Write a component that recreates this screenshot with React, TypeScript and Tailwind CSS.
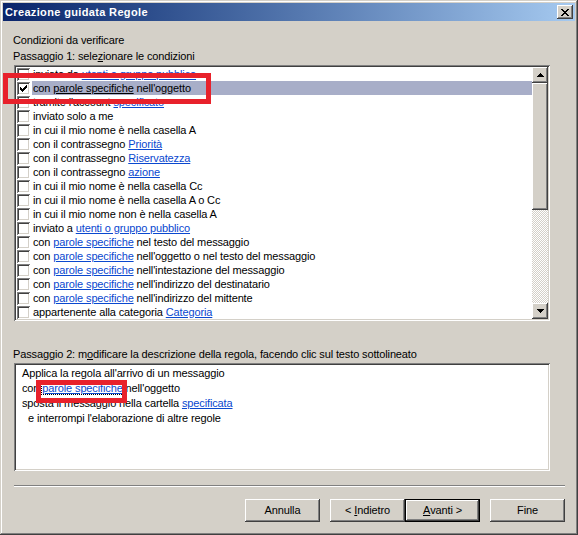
import React from "react";

const raised =
  "shadow-[inset_-1px_-1px_0_#404040,inset_1px_1px_0_#ffffff,inset_-2px_-2px_0_#808080,inset_2px_2px_0_#d4d0c8]";
const sunken =
  "shadow-[inset_1px_1px_0_#808080,inset_-1px_-1px_0_#ffffff,inset_2px_2px_0_#404040,inset_-2px_-2px_0_#d4d0c8]";

type Part = { t: string; link?: boolean };
type Row = { parts: Part[]; checked?: boolean; selected?: boolean };

const L = (t: string): Part => ({ t, link: true });
const T = (t: string): Part => ({ t });

const rows: Row[] = [
  { parts: [T("inviato da "), L("utenti o gruppo pubblico")] },
  { parts: [T("con "), L("parole specifiche"), T(" nell'oggetto")], checked: true, selected: true },
  { parts: [T("tramite l'account "), L("specificato")] },
  { parts: [T("inviato solo a me")] },
  { parts: [T("in cui il mio nome è nella casella A")] },
  { parts: [T("con il contrassegno "), L("Priorità")] },
  { parts: [T("con il contrassegno "), L("Riservatezza")] },
  { parts: [T("con il contrassegno "), L("azione")] },
  { parts: [T("in cui il mio nome è nella casella Cc")] },
  { parts: [T("in cui il mio nome è nella casella A o Cc")] },
  { parts: [T("in cui il mio nome non è nella casella A")] },
  { parts: [T("inviato a "), L("utenti o gruppo pubblico")] },
  { parts: [T("con "), L("parole specifiche"), T(" nel testo del messaggio")] },
  { parts: [T("con "), L("parole specifiche"), T(" nell'oggetto o nel testo del messaggio")] },
  { parts: [T("con "), L("parole specifiche"), T(" nell'intestazione del messaggio")] },
  { parts: [T("con "), L("parole specifiche"), T(" nell'indirizzo del destinatario")] },
  { parts: [T("con "), L("parole specifiche"), T(" nell'indirizzo del mittente")] },
  { parts: [T("appartenente alla categoria "), L("Categoria")] },
];

function Checkbox({ checked }: { checked?: boolean }) {
  return (
    <div className={`w-[13px] h-[13px] bg-white shrink-0 flex items-center justify-center ${sunken}`}>
      {checked && (
        <svg width="7" height="7" viewBox="0 0 7 7" shapeRendering="crispEdges">
          <path
            d="M6 0h1v1h-1zM5 1h2v1h-2zM0 2h1v1h-1zM4 2h3v1h-3zM0 3h2v1h-2zM3 3h3v1h-3zM0 4h5v1h-5zM1 5h3v1h-3zM2 6h1v1h-1z"
            fill="#000"
          />
        </svg>
      )}
    </div>
  );
}

function ScrollBtn({ up }: { up?: boolean }) {
  return (
    <div className={`w-[16px] h-[16px] bg-[#d4d0c8] flex items-center justify-center ${raised}`}>
      <svg width="7" height="4" viewBox="0 0 7 4" shapeRendering="crispEdges">
        {up ? (
          <path d="M3 0h1v1h1v1h1v1h1v1h-7v-1h1v-1h1v-1h1z" fill="#000" />
        ) : (
          <path d="M0 0h7v1h-1v1h-1v1h-1v1h-1v-1h-1v-1h-1v-1h-1z" fill="#000" />
        )}
      </svg>
    </div>
  );
}

function Btn({ children, def }: { children: React.ReactNode; def?: boolean }) {
  if (def) {
    return (
      <div className="w-[75px] h-[23px] border border-black">
        <div className={`w-full h-full bg-[#d4d0c8] flex items-center justify-center ${raised}`}>
          {children}
        </div>
      </div>
    );
  }
  return (
    <div className={`w-[75px] h-[23px] bg-[#d4d0c8] flex items-center justify-center ${raised}`}>
      {children}
    </div>
  );
}

export default function App() {
  return (
    <div
      className="relative w-[578px] h-[535px] bg-[#d4d0c8] p-[3px] flex flex-col text-[11px] leading-[13px] tracking-[-0.13px] text-black shadow-[inset_-1px_-1px_0_#404040,inset_1px_1px_0_#d4d0c8,inset_-2px_-2px_0_#808080,inset_2px_2px_0_#ffffff] overflow-hidden"
      style={{ fontFamily: '"Liberation Sans", Arial, sans-serif' }}
    >
      {/* Title bar */}
      <div className="h-[18px] flex items-center justify-between bg-gradient-to-r from-[#0a246a] to-[#a6caf0] pl-[2px] pr-[2px]">
        <span className="text-white font-bold text-[11px] leading-[13px] tracking-[0.35px]">
          Creazione guidata Regole
        </span>
        <div className={`w-[16px] h-[14px] bg-[#d4d0c8] flex items-center justify-center ${raised}`}>
          <svg width="8" height="7" viewBox="0 0 8 7" shapeRendering="crispEdges">
            <path
              d="M0 0h2v1h1v1h2v-1h1v-1h2v1h-1v1h-1v1h-1v1h1v1h1v1h1v1h-2v-1h-1v-1h-2v1h-1v1h-2v-1h1v-1h1v-1h1v-1h-1v-1h-1v-1h-1z"
              fill="#000"
            />
          </svg>
        </div>
      </div>

      {/* Body */}
      <div className="flex flex-col pl-[10px] pr-[10px]">
        <div className="mt-[13px] h-[13px]">Condizioni da verificare</div>
        <div className="mt-[3px] h-[13px]">
          Passaggio 1: sele<span className="underline">z</span>ionare le condizioni
        </div>

        {/* List box */}
        <div className={`mt-[2px] ml-[1px] w-[536px] h-[256px] bg-white p-[2px] flex ${sunken}`}>
          <div className="flex-1 flex flex-col overflow-hidden">
            {rows.map((r, i) => (
              <div key={i} className="h-[14px] flex items-center shrink-0 pl-[1px]">
                <Checkbox checked={r.checked} />
                <div
                  className={`ml-[2px] pl-[1px] h-[14px] flex-1 flex items-center whitespace-nowrap ${
                    r.selected ? "bg-[#a8aec8]" : ""
                  }`}
                >
                  {r.parts.map((p, j) =>
                    p.link ? (
                      <span key={j} className={`underline ${r.selected ? "text-black" : "text-[#0a48cf]"}`}>
                        {p.t}
                      </span>
                    ) : (
                      <span key={j} className="whitespace-pre">
                        {p.t}
                      </span>
                    )
                  )}
                </div>
              </div>
            ))}
          </div>
          {/* Scrollbar */}
          <div className="w-[16px] flex flex-col shrink-0">
            <ScrollBtn up />
            <div className={`h-[127px] bg-[#d4d0c8] ${raised}`} />
            <div className="flex-1 bg-[image:repeating-conic-gradient(#d4d0c8_0%_25%,#ffffff_0%_50%)] bg-[length:2px_2px]" />
            <ScrollBtn />
          </div>
        </div>

        <div className="mt-[27px] h-[13px]">
          Passaggio 2: m<span className="underline">o</span>dificare la descrizione della regola, facendo clic sul testo
          sottolineato
        </div>

        {/* Description box */}
        <div className={`mt-[2px] ml-[1px] w-[536px] h-[108px] bg-white pt-[3px] pl-[8px] flex flex-col ${sunken}`}>
          <div className="h-[15px] leading-[15px]">Applica la regola all'arrivo di un messaggio</div>
          <div className="h-[15px] leading-[15px] whitespace-pre">
            con <span className="underline text-[#0a48cf] outline-1 outline-dotted outline-black">parole specifiche</span>{" "}
            nell'oggetto
          </div>
          <div className="h-[15px] leading-[15px] whitespace-pre">
            sposta il messaggio nella cartella <span className="underline text-[#0a48cf]">specificata</span>
          </div>
          <div className="h-[15px] leading-[15px] pl-[6px]">e interrompi l'elaborazione di altre regole</div>
        </div>

        {/* Separator */}
        <div className="mt-[14px] ml-[1px] h-[2px] w-[551px] border-t border-t-[#808080] border-b border-b-white" />

        {/* Buttons */}
        <div className="mt-[12px] flex justify-end">
          <Btn>Annulla</Btn>
          <div className="ml-[10px] flex">
            <Btn>
              &lt; <span className="underline ml-[3px]">I</span>ndietro
            </Btn>
            <Btn def>
              <span className="underline">A</span>vanti &gt;
            </Btn>
          </div>
          <div className="ml-[10px]">
            <Btn>Fine</Btn>
          </div>
        </div>
      </div>

      {/* Annotation overlays */}
      <div className="absolute left-[3px] top-[73px] w-[208px] h-[31px] border-[5px] border-[#e8212b] pointer-events-none" />
      <div className="absolute left-[36px] top-[380px] w-[91px] h-[23px] border-[5px] border-[#e8212b] pointer-events-none" />
    </div>
  );
}
